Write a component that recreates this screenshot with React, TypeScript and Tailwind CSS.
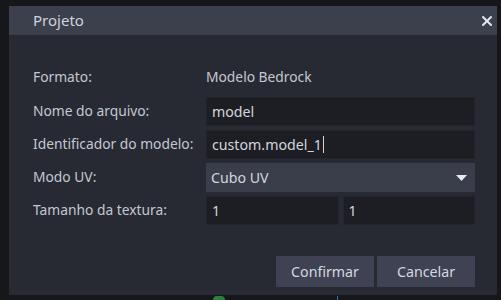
import { X } from "lucide-react";

const font = { fontFamily: '"Noto Sans", "Open Sans", sans-serif' };

function Row({ label, children }: { label: string; children: React.ReactNode }) {
  return (
    <div className="flex items-center h-[29px]">
      <div className="w-[173px] shrink-0 text-[13.8px] text-[#c4c8d1]">{label}</div>
      <div className="flex-1 flex gap-[4px] h-full">{children}</div>
    </div>
  );
}

function Input({ value, caret }: { value: string; caret?: boolean }) {
  return (
    <div className="flex-1 h-full bg-[#1c1e24] border border-[#22252c] flex items-center pl-[5px] text-[14.2px] text-[#d2d6de]">
      {value}
      {caret && <span className="inline-block w-px h-[17px] bg-[#d2d6de] ml-px" />}
    </div>
  );
}

export default function App() {
  return (
    <div className="w-[501px] h-[300px] bg-[#16171b] relative overflow-hidden" style={font}>
      <div className="absolute left-[9px] top-[6px] w-[488px] h-[289px] bg-[#272a33] flex flex-col">
        {/* title bar */}
        <div className="h-[29px] bg-[#3c404d] flex items-center justify-between pl-[24px] pr-[2px]">
          <span className="text-[15px] text-[#cdd3de]">Projeto</span>
          <X className="w-[16px] h-[16px] text-[#e4e7ec]" strokeWidth={3} />
        </div>

        <div className="pl-[24px] pr-[22px] pt-[28px] flex flex-col gap-[4px]">
          <div className="flex items-center h-[29px] mb-[1px]">
            <div className="w-[173px] shrink-0 text-[13.8px] text-[#c4c8d1]">Formato:</div>
            <div className="text-[13.8px] text-[#c4c8d1]">Modelo Bedrock</div>
          </div>
          <Row label="Nome do arquivo:">
            <Input value="model" />
          </Row>
          <Row label="Identificador do modelo:">
            <Input value="custom.model_1" caret />
          </Row>
          <Row label="Modo UV:">
            <div className="flex-1 h-full bg-[#3a3e4b] flex items-center justify-between pl-[5px] pr-[8px] text-[14.2px] text-[#d2d6de]">
              Cubo UV
              <svg width="11" height="6" viewBox="0 0 11 6">
                <path d="M0 0 L11 0 L5.5 6 Z" fill="#e8eaf0" />
              </svg>
            </div>
          </Row>
          <Row label="Tamanho da textura:">
            <Input value="1" />
            <Input value="1" />
          </Row>

          <div className="flex justify-end gap-[3px] mt-[27px]">
            <button className="w-[98px] h-[31px] bg-[#3e4252] text-[14.2px] text-[#d4d8e0]">Confirmar</button>
            <button className="w-[98px] h-[31px] bg-[#3e4252] text-[14.2px] text-[#d4d8e0]">Cancelar</button>
          </div>
        </div>
      </div>

      {/* bits of the app behind */}
      <div className="absolute left-[213px] top-[296px] w-[12px] h-[8px] rounded-full bg-[#2f7d3a]" />
      <div className="absolute left-[337px] top-[296px] w-px h-[4px] bg-[#3b6da8]" />
    </div>
  );
}
